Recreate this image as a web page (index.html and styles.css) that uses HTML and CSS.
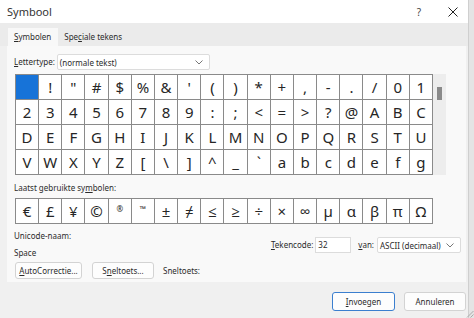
FILE: index.html
```html
<!DOCTYPE html>
<html lang="nl">
<head>
    <meta charset="UTF-8">
    <meta name="viewport" content="width=device-width, initial-scale=1.0">
    <title>Symbool</title>
    <link rel="stylesheet" href="styles.css">
</head>
<body>
    <div class="dialog">
        <div class="titlebar">
            <span class="title">Symbool</span>
            <span class="help">?</span>
            <span class="close">
                <svg width="10" height="10" viewBox="0 0 10 10"><path d="M0.5 0.5 L9.5 9.5 M9.5 0.5 L0.5 9.5" stroke="#222" stroke-width="1" fill="none"/></svg>
            </span>
        </div>

        <div class="tabs">
            <div class="tab active"><u>S</u>ymbolen</div>
            <div class="tab">Spe<u>c</u>iale tekens</div>
        </div>

        <div class="panel">
            <div class="font-row">
                <span class="label"><u>L</u>ettertype:</span>
                <div class="select font-select">
                    <span>(normale tekst)</span>
                    <svg width="8" height="5" viewBox="0 0 8 5"><path d="M0.5 0.5 L4 4 L7.5 0.5" stroke="#777" fill="none"/></svg>
                </div>
            </div>

            <div class="grid-row">
                <div class="grid" id="grid"></div>
                <div class="scrollbar"><div class="thumb"></div></div>
            </div>

            <div class="label recent-label">Laatst gebruikte sy<u>m</u>bolen:</div>
            <div class="grid recent" id="recent"></div>

            <div class="info-row">
                <div class="info-left">
                    <div class="label">Unicode-naam:</div>
                    <div class="label space">Space</div>
                </div>
                <div class="code">
                    <span class="label"><u>T</u>ekencode:</span>
                    <div class="input">32</div>
                    <span class="label van"><u>v</u>an:</span>
                    <div class="select from-select">
                        <span>ASCII (decimaal)</span>
                        <svg width="8" height="5" viewBox="0 0 8 5"><path d="M0.5 0.5 L4 4 L7.5 0.5" stroke="#777" fill="none"/></svg>
                    </div>
                </div>
            </div>

            <div class="button-row">
                <div class="btn auto"><u>A</u>utoCorrectie...</div>
                <div class="btn shortcut">S<u>n</u>eltoets...</div>
                <span class="label">Sneltoets:</span>
            </div>
        </div>

        <div class="footer">
            <div class="btn primary"><u>I</u>nvoegen</div>
            <div class="btn cancel">Annuleren</div>
        </div>
    </div>
    <svg class="grip" width="8" height="8" viewBox="0 0 8 8"><path d="M7.5 1 L1 7.5 M7.5 4.5 L4.5 7.5" stroke="#aaa" fill="none"/></svg>

    <script>
        const chars = [
            ' ', '!', '"', '#', '$', '%', '&', "'", '(', ')', '*', '+', ',', '-', '.', '/', '0', '1',
            '2', '3', '4', '5', '6', '7', '8', '9', ':', ';', '<', '=', '>', '?', '@', 'A', 'B', 'C',
            'D', 'E', 'F', 'G', 'H', 'I', 'J', 'K', 'L', 'M', 'N', 'O', 'P', 'Q', 'R', 'S', 'T', 'U',
            'V', 'W', 'X', 'Y', 'Z', '[', '\\', ']', '^', '_', '`', 'a', 'b', 'c', 'd', 'e', 'f', 'g'
        ];
        const recent = ['€', '£', '¥', '©', '®', '™', '±', '≠', '≤', '≥', '÷', '×', '∞', 'µ', 'α', 'β', 'π', 'Ω'];

        function fill(id, list) {
            const box = document.getElementById(id);
            list.forEach((c, i) => {
                const cell = document.createElement('div');
                cell.className = 'cell';
                if (id === 'grid' && i === 0) cell.className += ' selected';
                if (c === '®' || c === '™') cell.className += ' tiny';
                cell.textContent = c;
                box.appendChild(cell);
            });
        }

        fill('grid', chars);
        fill('recent', recent);
    </script>
</body>
</html>
```

FILE: styles.css
```css
body {
    margin: 0;
    background-color: #e4e4e4;
    font-family: "Noto Sans", "Open Sans", sans-serif;
    color: #2b2b2b;
    font-size: 8px;
    position: relative;
    height: 318px;
    overflow: hidden;
}
u {
    text-decoration: underline;
    text-decoration-thickness: 0.5px;
    text-underline-offset: 1px;
}
.dialog {
    width: 468px;
    height: 318px;
    background-color: #f0f0f0;
    border-right: 1px solid #cfcfcf;
}
.titlebar {
    height: 23px;
    background-color: #fff;
    display: flex;
    align-items: center;
    padding: 0 8px 0 7px;
}
.title {
    font-size: 11px;
    flex: 1;
    color: #333;
}
.help {
    font-size: 10px;
    color: #444;
    margin-right: 27px;
}
.close {
    display: flex;
    margin-right: 2px;
}
.tabs {
    height: 23px;
    display: flex;
    align-items: flex-end;
    padding-left: 8px;
    background-color: #ebebeb;
}
.tab {
    height: 18px;
    line-height: 17px;
    padding: 0 7px 0 6px;
}
.tab.active {
    background-color: #f8f8f8;
}
.panel {
    margin: 0 2px 0 7px;
    height: 236px;
    background-color: #f9f9f9;
    padding: 8px 0 0 7px;
    box-sizing: border-box;
}
.label {
    line-height: 12px;
}
.font-row {
    display: flex;
    align-items: center;
    height: 16px;
}
.select {
    height: 16px;
    box-sizing: border-box;
    background-color: #fff;
    border: 1px solid #dcdcdc;
    border-radius: 2px;
    display: flex;
    align-items: center;
    justify-content: space-between;
    padding: 0 6px 0 2px;
}
.font-select {
    width: 153px;
    margin-left: 2px;
}
.grid-row {
    display: flex;
    margin-top: 4px;
    margin-left: 1px;
}
.grid {
    width: 418px;
    box-sizing: border-box;
    display: grid;
    grid-template-columns: repeat(18, 1fr);
    grid-auto-rows: 24px;
    gap: 1px;
    border: 1px solid #8a8a8a;
    background-color: #8a8a8a;
}
.cell {
    background-color: #fff;
    font-size: 15px;
    display: flex;
    align-items: center;
    justify-content: center;
    color: #262626;
}
.cell.selected {
    background-color: #1773d8;
}
.cell.tiny {
    font-size: 8px;
    align-items: flex-start;
    padding-top: 4px;
}
.scrollbar {
    width: 13px;
    background-color: #ededed;
    position: relative;
}
.thumb {
    position: absolute;
    left: 4px;
    top: 13px;
    width: 5px;
    height: 13px;
    background-color: #8a8a8a;
}
.recent-label {
    margin-top: 7px;
}
.recent {
    margin-top: 4px;
    margin-left: 1px;
}
.info-row {
    display: flex;
    margin-top: 6px;
}
.info-left .space {
    margin-top: 5px;
}
.code {
    margin-left: auto;
    margin-right: 5px;
    margin-top: 7px;
    display: flex;
    align-items: center;
    height: 16px;
}
.input {
    width: 36px;
    height: 16px;
    box-sizing: border-box;
    background-color: #fff;
    border: 1px solid #dcdcdc;
    margin-left: 2px;
    padding-left: 2px;
    line-height: 14px;
}
.van {
    margin-left: 7px;
}
.from-select {
    width: 84px;
    margin-left: 3px;
}
.button-row {
    display: flex;
    align-items: center;
    margin-top: 3px;
    margin-left: 1px;
}
.btn {
    height: 17px;
    box-sizing: border-box;
    border: 1px solid #d3d3d3;
    border-radius: 3px;
    background-color: #fdfdfd;
    display: flex;
    align-items: center;
    justify-content: center;
}
.btn.auto {
    width: 67px;
}
.btn.shortcut {
    width: 62px;
    margin-left: 10px;
    margin-right: 9px;
}
.footer {
    display: flex;
    justify-content: flex-end;
    padding: 10px 2px 0 0;
}
.footer .btn {
    height: 19px;
}
.btn.primary {
    width: 63px;
    border-color: #3b7fcf;
    margin-right: 9px;
}
.btn.cancel {
    width: 62px;
}
.grip {
    position: absolute;
    right: 0;
    bottom: 0;
}
```
